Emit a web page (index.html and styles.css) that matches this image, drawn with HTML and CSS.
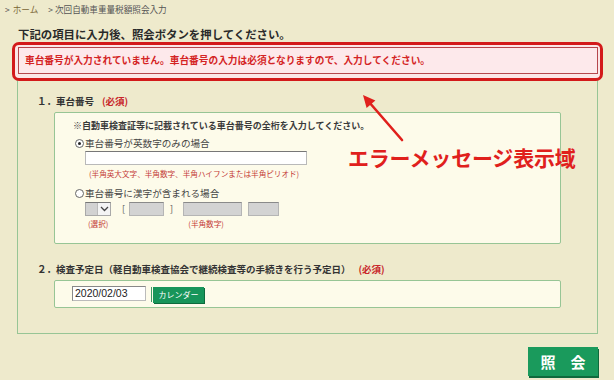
FILE: index.html
```html
<!DOCTYPE html>
<html lang="ja">
<head>
<meta charset="utf-8">
<link rel="stylesheet" href="styles.css">
</head>
<body>
<div class="page">
  <div class="crumbs"><span class="sep">&gt;</span> <span class="home">ホーム</span><span class="sep sep2">&gt;</span> 次回自動車重量税額照会入力</div>
  <div class="title">下記の項目に入力後、照会ボタンを押してください。</div>
  <div class="alert">
    <div class="alert-inner">車台番号が入力されていません。車台番号の入力は必須となりますので、入力してください。</div>
  </div>
  <div class="main">
    <div class="label">１．車台番号<span class="req">(必須)</span></div>
    <div class="box box1">
      <div class="note">※自動車検査証等に記載されている車台番号の全桁を入力してください。</div>
      <div class="radio-row"><span class="radio checked"></span>車台番号が英数字のみの場合</div>
      <div class="text-input"></div>
      <div class="hint hint1">(半角英大文字、半角数字、半角ハイフンまたは半角ピリオド)</div>
      <div class="radio-row row2"><span class="radio"></span>車台番号に漢字が含まれる場合</div>
      <div class="kanji-row">
        <div class="select"><span class="sel-btn"><svg width="9" height="6" viewBox="0 0 9 6"><path d="M1 1 L4.5 4.5 L8 1" fill="none" stroke="#444" stroke-width="1.3"/></svg></span></div>
        <span class="bracket b1">[</span>
        <div class="gray-input g1"></div>
        <span class="bracket b2">]</span>
        <div class="gray-input g2"></div>
        <div class="gray-input g3"></div>
      </div>
      <div class="hints2"><span class="hint h-sel">(選択)</span><span class="hint h-num">(半角数字)</span></div>
    </div>
    <div class="label label2">２．検査予定日（軽自動車検査協会で継続検査等の手続きを行う予定日）<span class="req">(必須)</span></div>
    <div class="box box2">
      <div class="date-input">2020/02/03</div>
      <span class="cal-line"></span>
      <div class="cal-btn">カレンダー</div>
    </div>
  </div>
  <div class="actions"><div class="submit">照　会</div></div>

  <div class="annot">エラーメッセージ表示域</div>
  <svg class="arrow" width="614" height="380" viewBox="0 0 614 380">
    <line x1="369" y1="102" x2="402" y2="140" stroke="#e0201c" stroke-width="2.6" stroke-linecap="round"/>
    <polygon points="363,95 366.6,108 375.4,100.4" fill="#e0201c"/>
  </svg>
</div>
</body>
</html>
```

FILE: styles.css
```css
html, body {
  margin: 0;
  padding: 0;
}
body {
  background: #eeeacc;
  font-family: "Noto Sans CJK JP", "Noto Sans", sans-serif;
  color: #333;
  width: 614px;
  height: 380px;
  overflow: hidden;
}
.page {
  position: relative;
  width: 614px;
  height: 380px;
}
.crumbs {
  height: 18px;
  line-height: 18px;
  font-size: 8.6px;
  padding-left: 5px;
  color: #555;
  white-space: nowrap;
}
.crumbs .home {
  color: #7a6534;
  margin-left: 1px;
}
.crumbs .sep2 {
  margin-left: 10px;
}
.title {
  margin: 9px 0 0 18px;
  font-size: 11.4px;
  line-height: 15px;
  font-weight: bold;
  color: #2a2a2a;
  white-space: nowrap;
}
.alert {
  position: relative;
  z-index: 2;
  margin: 0 11px 0 12px;
  border: 3px solid #d31a1a;
  border-radius: 7px;
  padding: 2px 2px 4px 3px;
  background: #fbe7e7;
}
.alert-inner {
  height: 25px;
  line-height: 25px;
  border: 1px solid #b5474c;
  background: #fde9eb;
  padding-left: 6px;
  font-size: 9.7px;
  font-weight: bold;
  color: #d42424;
  white-space: nowrap;
}
.main {
  margin: -12px 16px 0 17px;
  border: 1px solid #97c595;
  border-top: none;
  padding: 25px 0 25px 0;
}
.label {
  padding-left: 19px;
  font-size: 9.5px;
  line-height: 14px;
  font-weight: bold;
  color: #333;
  white-space: nowrap;
}
.label .req {
  color: #c8262a;
  margin-left: 8px;
}
.label2 {
  margin-top: 18px;
}
.box {
  margin: 4px 36px 0 36px;
  border: 1px solid #97c595;
  border-radius: 2px;
  background: #fdfbea;
}
.box1 {
  height: 130px;
  padding-left: 18px;
}
.note {
  margin-top: 6px;
  font-size: 9px;
  line-height: 13px;
  font-weight: bold;
  color: #3a3a3a;
  white-space: nowrap;
}
.radio-row {
  display: flex;
  align-items: center;
  margin-top: 4px;
  padding-left: 2px;
  font-size: 9.6px;
  line-height: 14px;
  color: #444;
  white-space: nowrap;
}
.row2 {
  margin-top: 6px;
}
.radio {
  width: 7px;
  height: 7px;
  border: 1px solid #666;
  border-radius: 50%;
  background: #fff;
  margin-right: 1px;
  position: relative;
  flex: none;
}
.radio.checked::after {
  content: "";
  position: absolute;
  left: 2px;
  top: 2px;
  width: 3px;
  height: 3px;
  border-radius: 50%;
  background: #222;
}
.text-input {
  margin: 1px 0 0 12px;
  width: 220px;
  height: 12px;
  background: #fff;
  border: 1px solid #b9b9b9;
  border-top-color: #777;
}
.hint {
  font-size: 7.6px;
  line-height: 12px;
  color: #c43a36;
  white-space: nowrap;
}
.hint1 {
  margin: 3px 0 0 16px;
}
.kanji-row {
  display: flex;
  align-items: center;
  margin: 2px 0 0 12px;
  height: 14px;
}
.select {
  width: 24px;
  height: 12px;
  background: #d2d2d2;
  border: 1px solid #a9a9a9;
  border-top-color: #777;
  display: flex;
  justify-content: flex-end;
}
.sel-btn {
  width: 12px;
  height: 12px;
  background: #f4f4f4;
  border-left: 1px solid #bbb;
  display: flex;
  align-items: center;
  justify-content: center;
}
.bracket {
  font-size: 9px;
  color: #555;
  line-height: 14px;
}
.b1 {
  margin: 0 4px 0 11px;
}
.b2 {
  margin: 0 10px 0 6px;
}
.gray-input {
  height: 12px;
  background: #d3d3d3;
  border: 1px solid #b5b5b5;
  border-top-color: #8a8a8a;
}
.g1 {
  width: 33px;
}
.g2 {
  width: 57px;
}
.g3 {
  width: 29px;
  margin-left: 6px;
}
.hints2 {
  display: flex;
  margin: 2px 0 0 15px;
}
.h-num {
  margin-left: 80px;
}
.box2 {
  height: 26px;
  display: flex;
  align-items: center;
  padding-left: 17px;
}
.date-input {
  width: 70px;
  height: 13px;
  line-height: 13px;
  border: 1px solid #888;
  border-right-color: #bbb;
  border-bottom-color: #bbb;
  background: #fff;
  padding-left: 2px;
  font-family: "Liberation Sans", Arial, sans-serif;
  font-size: 10.5px;
  color: #222;
  margin-top: -1px;
}
.cal-line {
  width: 1px;
  height: 15px;
  background: #3f9a63;
  margin-left: 5px;
}
.cal-btn {
  margin-left: 1px;
  width: 51px;
  height: 16px;
  line-height: 16px;
  background: #17955a;
  color: #fff;
  font-size: 8px;
  text-align: center;
  box-shadow: 1px 1px 0 #0d6b3d;
  margin-top: 1px;
}
.actions {
  display: flex;
  justify-content: flex-end;
  margin: 13px 16px 0 0;
}
.submit {
  width: 70px;
  height: 29px;
  line-height: 29px;
  background: #1a9a5c;
  color: #fff;
  font-size: 15px;
  font-weight: bold;
  text-align: center;
  box-shadow: 1px 2px 0 #0f6a3c;
}
.annot {
  position: absolute;
  left: 348px;
  top: 144px;
  font-size: 21px;
  line-height: 26px;
  font-weight: bold;
  color: #e0201c;
  white-space: nowrap;
  letter-spacing: -0.2px;
}
.arrow {
  position: absolute;
  left: 0;
  top: 0;
  pointer-events: none;
}
```
